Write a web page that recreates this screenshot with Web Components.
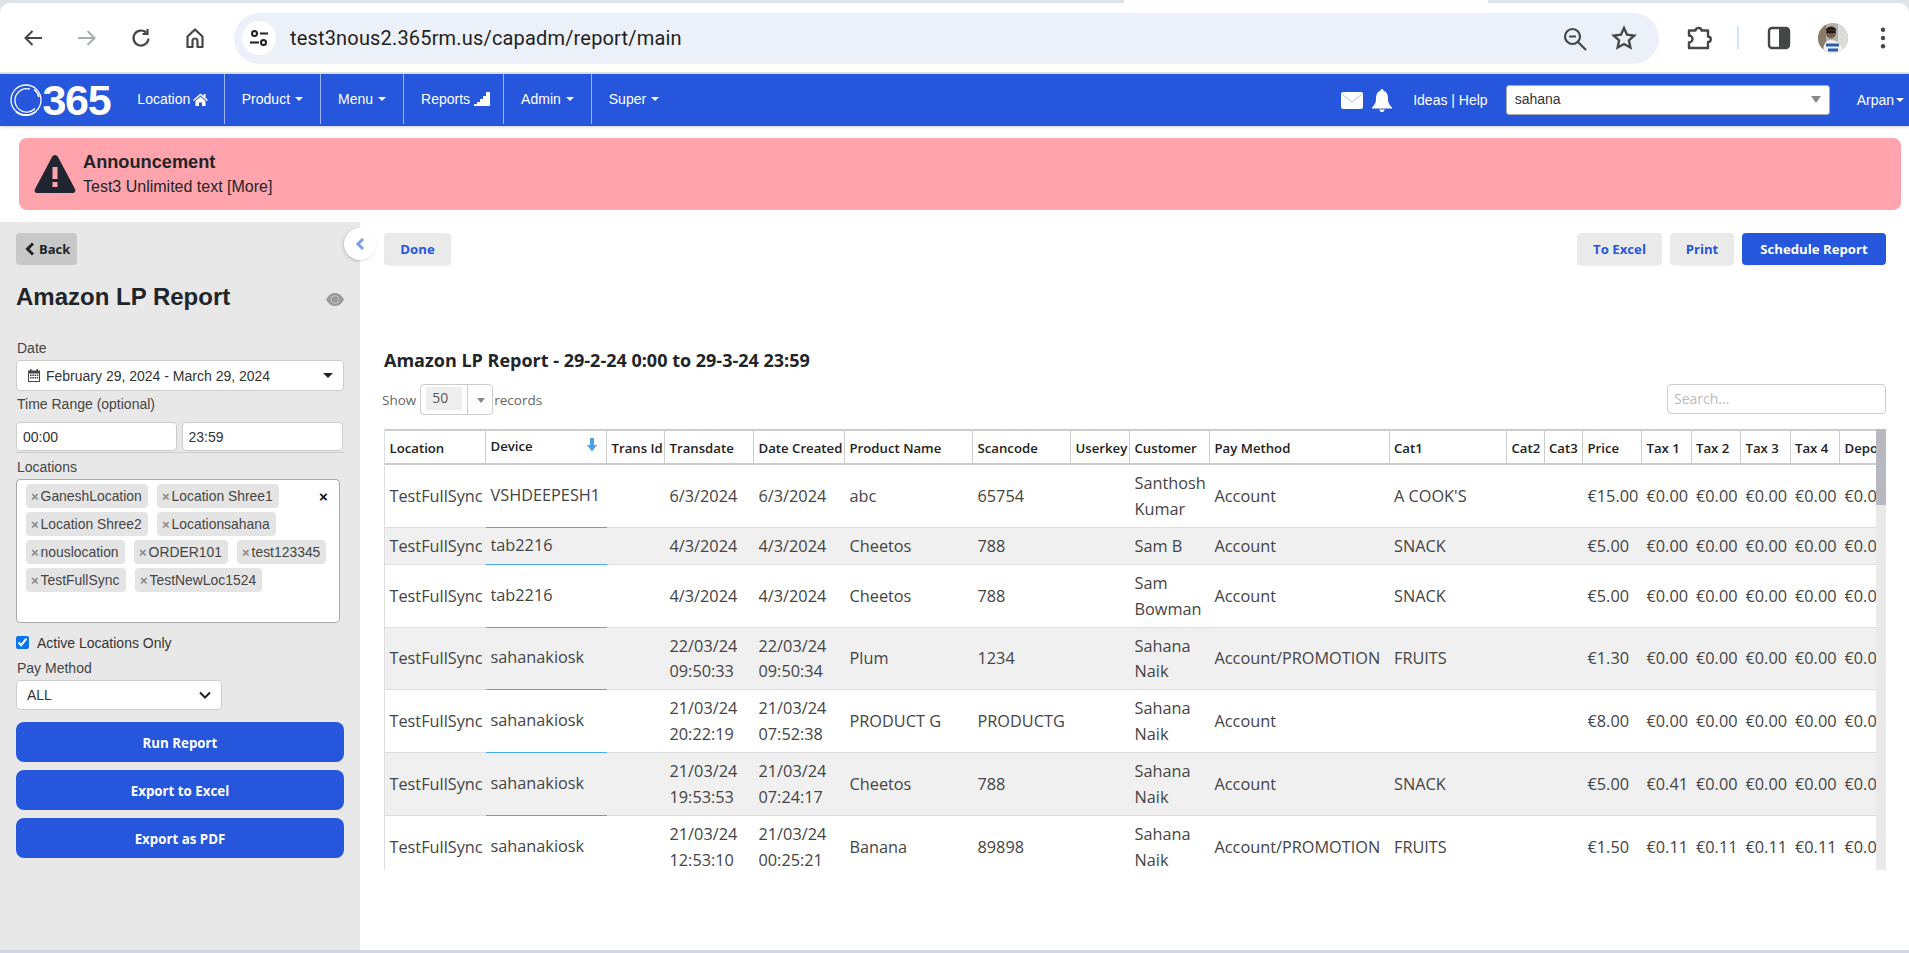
<!DOCTYPE html>
<html lang="en"><head><meta charset="utf-8"><title>Amazon LP Report</title>
<style>
html,body{margin:0;padding:0;height:953px;overflow:hidden;background:#fff;font-family:"Liberation Sans",Arial,sans-serif;}
body{display:flex;flex-direction:column;}
</style></head><body>
<browser-bar></browser-bar>
<app-nav></app-nav>
<alert-banner title-text="Announcement">Test3 Unlimited text [More]</alert-banner>
<report-shell>
  <report-sidebar slot="side"></report-sidebar>
  <report-main slot="main"></report-main>
</report-shell>
<script>
const def=(name,html,init)=>customElements.define(name,class extends HTMLElement{
  constructor(){super();this.attachShadow({mode:'open'}).innerHTML=typeof html==='function'?html(this):html;}
  connectedCallback(){if(init)init(this);}
});

def('browser-bar',`<style>
:host{display:block;height:74px;box-sizing:border-box;background:#dee3e8;padding-top:3px;flex:none;position:relative}
.tab{position:absolute;left:1124px;top:0;width:364px;height:4px;background:#fff}
.bar{height:69px;background:#fff;border-radius:10px 10px 0 0;display:flex;align-items:center;padding:0 0 0 21px;box-sizing:border-box;position:relative}
.btn{width:24px;height:24px;margin-right:30px;flex:none;display:block}
.btn svg,.i svg{display:block}
.omni{flex:none;width:1425px;height:51px;margin-left:0;margin-top:1px;background:#ecf0f8;border-radius:26px;display:flex;align-items:center;box-sizing:border-box;padding-left:8px}
.tune{width:34px;height:34px;border-radius:50%;background:#fff;display:flex;align-items:center;justify-content:center;flex:none}
.url{font:20px Roboto,sans-serif;color:#1f1f1f;margin-left:14px;flex:1;white-space:nowrap;letter-spacing:.17px}
.i{flex:none}
.sep{width:2px;height:23px;background:#d3e3fd;flex:none}
</style>
<div class="tab"></div>
<div class="bar">
<span class="btn"><svg width="24" height="24" viewBox="0 0 24 24" fill="none" stroke="#444746" stroke-width="2"><path d="M21 12H5M11.500 5 4.500 12l7 7"/></svg></span>
<span class="btn"><svg width="24" height="24" viewBox="0 0 24 24" fill="none" stroke="#a8abaf" stroke-width="2"><path d="M3 12h16M12.500 5l7 7-7 7"/></svg></span>
<span class="btn"><svg width="24" height="24" viewBox="0 0 24 24" fill="none" stroke="#444746" stroke-width="2.200"><path d="M19.500 12.500a7.500 7.500 0 1 1-2.300-5.900"/><path d="M18.500 3v5h-5" /></svg></span>
<span class="btn" style="margin-right:27px"><svg width="24" height="24" viewBox="0 0 24 24" fill="none" stroke="#444746" stroke-width="2.200" stroke-linejoin="round"><path d="M4.500 21V10.500L12 3.500l7.500 7V21h-5v-6a2.500 2.500 0 0 0-5 0v6z"/></svg></span>
<div class="omni">
  <span class="tune"><svg width="20" height="20" viewBox="0 0 20 20" fill="none" stroke="#1f1f1f" stroke-width="2"><circle cx="5.500" cy="5.500" r="2.500"/><path d="M11 5.500h8M1 14.500h9"/><circle cx="14.500" cy="14.500" r="2.500"/></svg></span>
  <span class="url">test3nous2.365rm.us/capadm/report/main</span>
  <span class="i" style="margin-right:21px;margin-top:1px"><svg width="28" height="28" viewBox="0 0 28 28" fill="none" stroke="#444746" stroke-width="2.200"><circle cx="11.500" cy="11.500" r="7.500"/><path d="M17 17l8 8M8 11.500h7"/></svg></span>
  <span class="i" style="margin-right:21px;margin-top:-1px"><svg width="28" height="28" viewBox="0 0 24 24" fill="none" stroke="#444746" stroke-width="2"><path d="M12 3.500l2.600 5.700 6.200.7-4.600 4.200 1.300 6.100L12 17.200l-5.500 3 1.300-6.100-4.600-4.200 6.200-.7z"/></svg></span>
</div>
<span class="i" style="margin-left:26px"><svg width="28" height="28" viewBox="0 0 28 28" fill="none" stroke="#444746" stroke-width="2.400" stroke-linejoin="round"><path d="M4 6.500h6.500a3 2.500 0 0 1 6 0H23v6a2.700 2.700 0 0 1 0 5.500v6H4v-5.500a3.500 3.500 0 0 0 0-7z"/></svg></span>
<span class="sep" style="margin-left:24px"></span>
<span class="i" style="margin-left:28px"><svg width="24" height="24" viewBox="0 0 24 24"><rect x="2" y="2" width="20" height="20" rx="3" fill="none" stroke="#444746" stroke-width="2.400"/><rect x="12" y="3" width="9" height="18" fill="#444746"/></svg></span>
<span class="i" style="margin-left:27px"><svg width="30" height="30" viewBox="0 0 30 30" style="border-radius:50%"><rect width="30" height="30" fill="#b5b1a8"/><rect x="20" width="10" height="30" fill="#dcdcd8"/><rect width="8" height="30" fill="#8b7b6a"/><ellipse cx="13" cy="9.500" rx="5" ry="6" fill="#7a5a45"/><path d="M7.800 7.500c0-5 10.400-5 10.400 0z" fill="#221e1c"/><rect x="8.500" y="7.800" width="9" height="2.300" fill="#15181c"/><path d="M5 30c0-9 3-13 8-13s11 3 12 13z" fill="#eef1f5"/><path d="M8 20.500h13v3H8zM10 25.500h10v3H10z" fill="#2f5ea8"/></svg></span>
<span class="i" style="margin-left:31px"><svg width="8" height="24" viewBox="0 0 8 24" fill="#444746"><circle cx="4" cy="3.700" r="2.200"/><circle cx="4" cy="12" r="2.200"/><circle cx="4" cy="20.300" r="2.200"/></svg></span>
</div>`);

def('nav-item',h=>`<style>
:host{display:flex;align-items:center;height:50px;padding:0 17px;border-right:1px solid rgba(255,255,255,.55);color:#fff;font:14px "Liberation Sans",sans-serif;align-self:flex-start;box-sizing:border-box}
:host([last]){border-right:0}
.c{width:0;height:0;border:4px solid transparent;border-top-color:#fff;border-bottom:0;margin-left:5px}
.ic{display:inline-flex}
</style><slot></slot>${h.hasAttribute('caret')?'<span class="c"></span>':''}<span class="ic"><slot name="icon"></slot></span>`);

def('app-nav',`<style>
:host{display:flex;height:52px;background:#2656db;flex:none;align-items:center;box-shadow:0 1px 3px rgba(0,0,0,.2);color:#fff;font:14px "Liberation Sans",sans-serif;position:relative;padding-left:10px;box-sizing:border-box}
.logo{display:flex;align-items:center;margin-right:10px;height:52px;align-self:flex-start}
.num{font:bold 43px/1 "Liberation Sans",sans-serif;letter-spacing:-1.300px;margin-left:-.5px}
.spacer{flex:1}
.sel{width:324px;height:30px;box-sizing:border-box;background:#fff;border-radius:3px;border:1px solid #aaa;color:#333;display:flex;align-items:center;padding:0 6px 2px 8px;justify-content:space-between;margin-left:18px}
.a{width:0;height:0;border:5px solid transparent;border-top:7px solid #888;border-bottom:0;margin-right:2px}
.u{margin-left:27px;display:flex;align-items:center;margin-right:5px;}
.u i{width:0;height:0;border:4px solid transparent;border-top-color:#fff;border-bottom:0;margin-left:2px}
svg{display:block}
</style>
<div class="logo"><svg width="33" height="34" viewBox="0 0 33 34" fill="none" stroke="#fff"><circle cx="16" cy="17" r="15" stroke-width="1.300"/><path d="M20 6.200A11.700 11.700 0 1 0 25 25.500" stroke-width="1.300"/><path d="M6 28.500A15.200 15.200 0 0 0 26 28.300" stroke-width="1.800"/><path d="M24 6.500A13 13 0 0 1 29 14" stroke-width="1.500"/></svg><span class="num">365</span></div>
<nav-item style="padding-right:15.500px">Location<svg slot="icon" style="margin-left:3px" width="15" height="13" viewBox="0 0 15 13" fill="#fff"><path d="M7.500.5 10.500 3V1h2v3.800L15 7l-1 1-6.500-5.500L1 8 0 7zM2.500 8l5-4.200 5 4.200v5H9V9.500H6V13H2.500z"/></svg></nav-item>
<nav-item caret>Product</nav-item>
<nav-item caret>Menu</nav-item>
<nav-item style="padding-right:13px">Reports<svg slot="icon" style="margin-left:4px" width="16" height="14" viewBox="0 0 16 14" fill="#fff"><path d="M0 14v-2h3v-2h3V7h3V4h3V0h4v14z"/></svg></nav-item>
<nav-item caret>Admin</nav-item>
<nav-item caret last>Super</nav-item>
<span class="spacer"></span>
<svg width="22" height="17" viewBox="0 0 22 17" style="margin-right:9px"><rect width="22" height="17" rx="2" fill="#fff"/><path d="M1 2l10 8 10-8" fill="none" stroke="#9db4ef" stroke-width=".8"/></svg>
<svg width="20" height="23" viewBox="0 0 20 23" fill="#fff" style="margin-right:21px"><path d="M10 0c1 0 1.500.8 1.500 1.800C15 3 16 6 16 10c0 4 1.500 6 4 8.500v1H0v-1C2.500 16 4 14 4 10c0-4 1-7 4.500-8.200C8.500.8 9 0 10 0zM7.500 20.500h5A2.500 2.500 0 0 1 7.500 20.500z"/></svg>
<span>Ideas | Help</span>
<div class="sel"><span>sahana</span><span class="a"></span></div>
<span class="u">Arpan<i></i></span>`);

def('alert-banner',h=>`<style>
:host{display:block;flex:none;margin:12px 8px 12px 19px;height:72px;background:#ffa4ac;border-radius:8px;box-sizing:border-box;color:#212529}
.w{display:flex;align-items:center;height:100%;padding-left:15px}
svg{display:block;flex:none}
.t{margin-left:7px;margin-top:-1px}
b{display:block;font:bold 18.200px/22px "Liberation Sans",sans-serif;margin-bottom:4px}
span{font:16px/20px "Liberation Sans",sans-serif}
</style><div class="w"><svg width="42" height="40" viewBox="0 0 42 40"><path d="M21 1c1.500 0 2.500 1 3 2l17 32c1 2 0 4-2.500 4H3.500C1 39 0 37 1 35L18 3c.5-1 1.500-2 3-2z" fill="#212532"/><rect x="18.500" y="13" width="5" height="12" fill="#ffa4ac"/><rect x="18.500" y="28" width="5" height="5" fill="#ffa4ac"/></svg><div class="t"><b>${h.getAttribute('title-text')}</b><span><slot></slot></span></div></div>`);

def('report-shell',`<style>
:host{display:flex;flex:1;min-height:0;border-bottom:3px solid #d4d4e6;height:731px}
::slotted([slot=side]){flex:none}
::slotted([slot=main]){flex:1;min-width:0}
</style><slot name="side"></slot><slot name="main"></slot>`);

def('loc-chip',`<style>
:host{display:inline-flex;align-items:center;height:24px;background:#e4e4e4;border-radius:4px;padding:0 0 0 5px;font:13.900px "Liberation Sans",sans-serif;color:#444;box-sizing:border-box;white-space:nowrap}
i{font:bold 13px "Liberation Sans",sans-serif;color:#888;margin-right:2px;font-style:normal}
</style><i>×</i><slot></slot>`);

def('side-btn',`<style>
:host{display:flex;height:40px;margin-bottom:8px;background:#2656db;border-radius:8px;color:#fff;align-items:center;justify-content:center;font:bold 13.300px "Open Sans",sans-serif;padding-top:1px;box-sizing:border-box}
</style><slot></slot>`);

def('report-sidebar',`<style>
:host{display:block;width:360px;background:#e8e8e8;box-sizing:border-box;padding:11px 16px 0;position:relative;color:#444;font:14px "Liberation Sans",sans-serif;height:728px}
svg{display:block}
.back{display:inline-flex;align-items:center;height:32px;width:61px;box-sizing:border-box;padding-left:9px;background:#c8c8c8;border-radius:4px;font:bold 13px "Open Sans",sans-serif;color:#212529}
.back svg{margin-right:4px}
.head{display:flex;justify-content:space-between;align-items:center;margin-top:16px;height:32px;padding-right:0}
h1{margin:0;font:bold 24px/32px "Liberation Sans",sans-serif;color:#212529}
label{display:block;padding-left:1px;line-height:16px}
.box{background:#fff;border:1px solid #ccc;border-radius:4px;box-sizing:border-box}
.date{height:31px;width:328px;display:flex;align-items:center;padding:0 10px 0 11px;margin-top:4px}
.date span{flex:1;margin-left:6px;color:#333}
.car{width:0;height:0;border:5px solid transparent;border-top:5px solid #222;border-bottom:0}
.times{display:flex;gap:4.500px;padding-bottom:1px;border-bottom:1px solid #ccc;margin-top:10px;width:328px}
.times .box{width:161px;height:29px;display:flex;align-items:center;padding-left:6px;color:#333}
.locs{width:324px;height:144px;border:1px solid #aaa;border-radius:4px;background:#fff;box-sizing:border-box;padding:4px 9px;display:flex;flex-wrap:wrap;gap:4px 9px;align-content:flex-start;margin-top:4px;position:relative}
.x{position:absolute;left:302px;top:8px;font:bold 15px "Liberation Sans",sans-serif;color:#111;line-height:18px}
.chk{display:flex;align-items:center;margin-top:13px;color:#333;height:13px}
.chk input{margin:0 8px 0 0;width:13px;height:13px;accent-color:#0b75e8}
.sel{width:206px;height:30px;display:flex;align-items:center;justify-content:space-between;padding:0 9px 0 10px;color:#333;margin-top:4px}
.acts{margin-top:12px;width:328px}
.tog{position:absolute;left:344px;top:6px;width:32px;height:32px;border-radius:50%;background:#fff;box-shadow:-1px 1px 3px rgba(0,0,0,.18);display:flex;align-items:center;justify-content:center;z-index:2}
</style>
<span class="tog"><svg width="10" height="14" viewBox="0 0 10 14" fill="none" stroke="#7f9bec" stroke-width="3"><path d="M8 2 3 7l5 5"/></svg></span>
<div class="back"><svg width="10" height="14" viewBox="0 0 10 14" fill="none" stroke="#212529" stroke-width="3"><path d="M8 1.500 2.500 7 8 12.500"/></svg>Back</div>
<div class="head"><h1>Amazon LP Report</h1><svg width="18" height="13" viewBox="0 0 18 13" style="margin-top:5px"><path d="M9 0c4 0 7 2.700 9 6.500-2 3.800-5 6.500-9 6.500S2 10.300 0 6.500C2 2.700 5 0 9 0z" fill="#999"/><circle cx="9" cy="6.500" r="3.800" fill="#999" stroke="#c9c9c9" stroke-width="1"/></svg></div>
<label style="margin-top:27px">Date</label>
<div class="box date"><svg width="12" height="13" viewBox="0 0 12 13" fill="#444"><path d="M2 0h1.500v1.500h5V0H10v1.500h2V13H0V1.500h2zM1 4.500v7.500h10V4.500z"/><path d="M2 5.500h1.600v1.500H2zM4.300 5.500h1.600v1.500H4.300zM6.600 5.500h1.600v1.500H6.600zM8.900 5.500h1.400v1.500H8.900zM2 8h1.600v1.500H2zM4.300 8h1.600v1.500H4.300zM6.600 8h1.600v1.500H6.600zM8.900 8h1.400v1.500H8.900z"/></svg><span>February 29, 2024 - March 29, 2024</span><i class="car"></i></div>
<label style="margin-top:5px">Time Range (optional)</label>
<div class="times"><div class="box">00:00</div><div class="box">23:59</div></div>
<label style="margin-top:6px">Locations</label>
<div class="locs">
<loc-chip style="width:122px">GaneshLocation</loc-chip><loc-chip style="width:122px">Location Shree1</loc-chip>
<loc-chip style="width:122px">Location Shree2</loc-chip><loc-chip style="width:119px">Locationsahana</loc-chip>
<loc-chip style="width:99px">nouslocation</loc-chip><loc-chip style="width:94px">ORDER101</loc-chip><loc-chip style="width:89px">test123345</loc-chip>
<loc-chip style="width:100px">TestFullSync</loc-chip><loc-chip style="width:127px">TestNewLoc1524</loc-chip>
<span class="x">×</span>
</div>
<div class="chk"><input type="checkbox" checked><span>Active Locations Only</span></div>
<label style="margin-top:11px">Pay Method</label>
<div class="box sel"><span>ALL</span><svg width="14" height="8" viewBox="0 0 14 8" fill="none" stroke="#222" stroke-width="2"><path d="M2 1.500 7 6.500l5-5"/></svg></div>
<div class="acts"><side-btn>Run Report</side-btn><side-btn>Export to Excel</side-btn><side-btn>Export as PDF</side-btn></div>`);

def('tool-btn',`<style>
:host{display:inline-flex;height:32px;align-items:center;justify-content:center;box-sizing:border-box;background:#eaeaea;color:#2656db;border-radius:4px;font:bold 13.200px "Open Sans",sans-serif;box-shadow:0 1px 1px rgba(0,0,0,.05)}
:host([primary]){background:#2656db;color:#fff}
</style><slot></slot>`);

const COLS=[['Location',101],['Device',121],['Trans Id',58],['Transdate',89],['Date Created',91],['Product Name',128],['Scancode',98],['Userkey',59],['Customer',80],['Pay Method',179.5],['Cat1',117.5],['Cat2',37.5],['Cat3',38.5],['Price',59],['Tax 1',49.5],['Tax 2',49.5],['Tax 3',49.5],['Tax 4',49.5],['Depo',60]];
const z='€0.00',t4=[z,z,z,z,z];
const ROWS=[
['VSHDEEPESH1','6/3/2024','6/3/2024','abc','65754','Santhosh Kumar','Account',"A COOK'S",'€15.00',t4],
['tab2216','4/3/2024','4/3/2024','Cheetos','788','Sam B','Account','SNACK','€5.00',t4],
['tab2216','4/3/2024','4/3/2024','Cheetos','788','Sam Bowman','Account','SNACK','€5.00',t4],
['sahanakiosk','22/03/24 09:50:33','22/03/24 09:50:34','Plum','1234','Sahana Naik','Account/PROMOTION','FRUITS','€1.30',t4],
['sahanakiosk','21/03/24 20:22:19','21/03/24 07:52:38','PRODUCT G','PRODUCTG','Sahana Naik','Account','','€8.00',t4],
['sahanakiosk','21/03/24 19:53:53','21/03/24 07:24:17','Cheetos','788','Sahana Naik','Account','SNACK','€5.00',['€0.41',z,z,z,z]],
['sahanakiosk','21/03/24 12:53:10','21/03/24 00:25:21','Banana','89898','Sahana Naik','Account/PROMOTION','FRUITS','€1.50',['€0.11','€0.11','€0.11','€0.11',z]],
];
def('data-table',()=>`<style>
:host{display:flex;height:441px;overflow:hidden}
.clip{width:1492px;overflow:hidden;height:441px;flex:none;border-left:1px solid #ddd;box-sizing:border-box}
.clip2{width:1502px}
table{border-collapse:separate;border-spacing:0;table-layout:fixed;width:${COLS.reduce((a,c)=>a+c[1],0)}px}
th{font:600 13.200px/20px "Open Sans",sans-serif;color:#222;text-align:left;padding:2px 0 0 4.500px;height:36px;box-sizing:border-box;border-top:2px solid #ccc;border-bottom:2px solid #ccc;border-right:1px solid #ccc;white-space:nowrap;overflow:hidden;position:relative}
th.sd{padding-bottom:4px}
th svg{position:absolute;left:101px;top:7px}
td{font:16.300px/25.900px "Open Sans",sans-serif;color:#444;padding:6px 0 4px 4.500px;border-bottom:1px solid #ddd;vertical-align:middle;overflow:hidden;white-space:normal}
td.nw{white-space:nowrap}
td.dv{border-bottom-color:#4aa8ee;padding-top:5px;padding-bottom:5px}
tr:nth-child(even) td{background:#f0f0f0}
.track{width:10px;height:441px;background:#e9e9e9;flex:none}
.thumb{height:76px;background:#b8b8c0}
</style>
<div class="clip"><div class="clip2"><table><colgroup>${COLS.map(c=>`<col style="width:${c[1]}px">`).join('')}</colgroup>
<thead><tr>${COLS.map((c,i)=>i==1?`<th class="sd">${c[0]}<svg width="10" height="14" viewBox="0 0 10 14" fill="#4aa3ea"><path d="M3 0h4v7h3l-5 6.500L0 7h3z"/></svg></th>`:`<th>${c[0]}</th>`).join('')}</tr></thead>
<tbody>${ROWS.map(r=>`<tr><td class="nw">TestFullSync</td><td class="nw dv">${r[0]}</td><td></td><td>${r[1]}</td><td>${r[2]}</td><td>${r[3]}</td><td>${r[4]}</td><td></td><td>${r[5]}</td><td class="nw">${r[6]}</td><td class="nw">${r[7]}</td><td></td><td></td><td class="nw">${r[8]}</td>${r[9].map(v=>`<td class="nw">${v}</td>`).join('')}</tr>`).join('')}</tbody></table></div></div>
<div class="track"><div class="thumb"></div></div>`);

def('report-main',`<style>
:host{display:block;box-sizing:border-box;padding:11px 23px 0 24px;height:728px;overflow:hidden}
.top{display:flex;justify-content:space-between}
.r{display:flex;gap:8px}
h2{margin:84px 0 0;font:bold 18px/22px "Open Sans",sans-serif;color:#212529}
.ctl{display:flex;justify-content:space-between;align-items:flex-start;margin-top:13px;height:45px}
.show{display:flex;align-items:center;height:31px;font:13.500px "Open Sans",sans-serif;color:#666;margin-left:-2px}
.pick{width:73px;height:31px;border:1px solid #ccc;border-radius:4px;box-sizing:border-box;margin:0 1px 0 4px;display:flex;position:relative}
.pick b{font:400 14px/22px "Open Sans",sans-serif;background:#eee;width:36px;height:23px;margin:2px 0 0 5px;padding-left:6px;box-sizing:border-box;color:#555}
.pick i{position:absolute;left:46px;top:0;bottom:0;border-left:1px solid #ccc;width:26px}
.pick i::after{content:"";position:absolute;left:9px;top:13px;border:4px solid transparent;border-top:5px solid #888;border-bottom:0}
.search{width:219px;height:30px;border:1px solid #ccc;border-radius:4px;box-sizing:border-box;padding-left:6px;font:14px/28px "Open Sans",sans-serif;color:#bbb}
</style>
<div class="top"><tool-btn style="width:67px">Done</tool-btn><div class="r"><tool-btn style="width:85px">To Excel</tool-btn><tool-btn style="width:64px">Print</tool-btn><tool-btn primary style="width:144px">Schedule Report</tool-btn></div></div>
<h2>Amazon LP Report - 29-2-24 0:00 to 29-3-24 23:59</h2>
<div class="ctl"><div class="show">Show<span class="pick"><b>50</b><i></i></span>records</div><div class="search">Search...</div></div>
<data-table></data-table>`);
</script>
</body></html>
